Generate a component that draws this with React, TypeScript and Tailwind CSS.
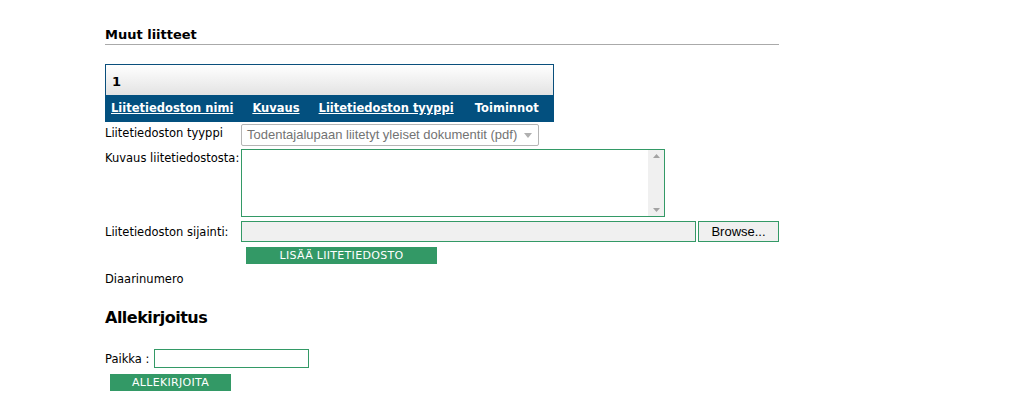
import React from 'react';

const labelFont = { fontFamily: '"DejaVu Sans", Verdana, sans-serif' };

function Scrollbar() {
  return (
    <div className="flex w-[16px] flex-col items-center justify-between bg-[#f0f0f0] py-[4px]">
      <svg width="7" height="4" viewBox="0 0 7 4">
        <path d="M0 4 L3.5 0 L7 4 Z" fill="#a3a3a3" />
      </svg>
      <svg width="7" height="4" viewBox="0 0 7 4">
        <path d="M0 0 L3.5 4 L7 0 Z" fill="#a3a3a3" />
      </svg>
    </div>
  );
}

export default function App() {
  return (
    <div className="min-h-screen bg-white text-black" style={labelFont}>
      <div className="ml-[105px] w-[674px] pt-[27px]">
        <h2 className="border-b border-[#aaaaaa] pb-[2px] text-[13px] font-bold leading-[15px]">Muut liitteet</h2>

        <div className="mt-[19px] w-[449px] border border-b-0 border-[#0a4f7c]">
          <div className="h-[30px] bg-gradient-to-b from-white to-[#e3e3e3] pl-[6px] pt-[10px] text-[13px] font-bold leading-[14px]">
            1
          </div>
        </div>
        <div className="flex h-[27px] w-[449px] items-center gap-[19px] bg-[#03507f] pl-[6px] text-[11.5px] font-bold text-white">
          <a className="underline">Liitetiedoston nimi</a>
          <a className="underline">Kuvaus</a>
          <a className="underline">Liitetiedoston tyyppi</a>
          <span className="pl-[2px]">Toiminnot</span>
        </div>

        <div className="mt-[2px] flex">
          <label className="w-[136px] pt-[2px] text-[11.5px] leading-[14px]">Liitetiedoston tyyppi</label>
          <div
            className="flex h-[22px] w-[298px] items-center justify-between rounded-[2px] border border-[#b5b5b5] pl-[5px] pr-[6px] text-[13px] text-[#737373]"
            style={{ fontFamily: '"Liberation Sans", Arial, sans-serif' }}
          >
            <span>Todentajalupaan liitetyt yleiset dokumentit (pdf)</span>
            <svg width="8" height="5" viewBox="0 0 8 5">
              <path d="M0 0 L4 5 L8 0 Z" fill="#b0b0b0" />
            </svg>
          </div>
        </div>

        <div className="mt-[3px] flex">
          <label className="w-[136px] pt-[2px] text-[11.5px] leading-[14px]">Kuvaus liitetiedostosta:</label>
          <div className="flex h-[68px] w-[424px] justify-end border border-[#339966] bg-white">
            <Scrollbar />
          </div>
        </div>

        <div className="mt-[4px] flex items-center">
          <label className="w-[136px] text-[11.5px] leading-[14px]">Liitetiedoston sijainti:</label>
          <div className="h-[21px] w-[455px] border border-[#339966] bg-[#f0f0f0]" />
          <button
            className="ml-[2px] h-[21px] w-[81px] border border-[#339966] bg-[#f0f0f0] text-[13px] text-black"
            style={{ fontFamily: '"Liberation Sans", Arial, sans-serif' }}
          >
            Browse...
          </button>
        </div>

        <button className="ml-[141px] mt-[4px] h-[17px] w-[191px] bg-[#339966] text-[11px] leading-[17px] tracking-[0.3px] text-white">
          LISÄÄ LIITETIEDOSTO
        </button>

        <div className="mt-[6px] text-[11.5px] leading-[14px]">Diaarinumero</div>

        <h2 className="mt-[21px] text-[16px] font-bold leading-[21px] tracking-[-0.5px]">Allekirjoitus</h2>

        <div className="mt-[21px] flex items-center">
          <label className="w-[49px] text-[11.5px] leading-[14px]">Paikka :</label>
          <input className="h-[19px] w-[155px] border border-[#339966] bg-white outline-none" />
        </div>
        <button className="ml-[5px] mt-[6px] h-[17px] w-[121px] bg-[#339966] text-[11px] leading-[17px] tracking-[0.3px] text-white">
          ALLEKIRJOITA
        </button>
      </div>
    </div>
  );
}
